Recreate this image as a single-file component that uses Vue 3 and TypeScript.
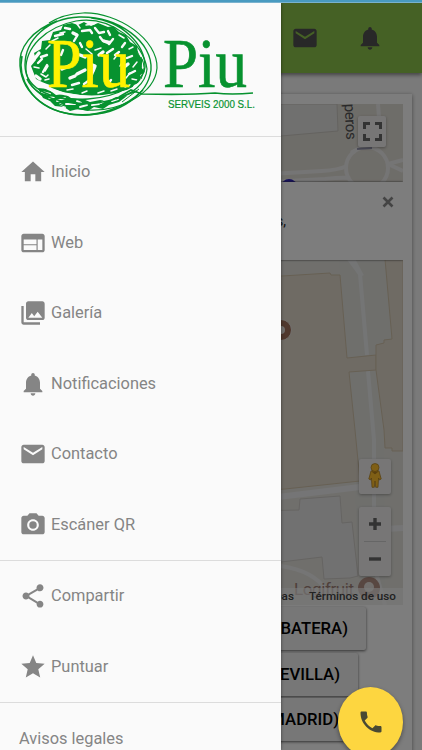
<script setup lang="ts">
import { ref } from 'vue'

interface MenuItem {
    label: string
    icon: string
}

const icons: Record<string, string> = {
    home: 'M10 20v-6h4v6h5v-8h3L12 3 2 12h3v8z',
    web: 'M20 4H4c-1.1 0-1.99.9-1.99 2L2 18c0 1.1.9 2 2 2h16c1.1 0 2-.9 2-2V6c0-1.1-.9-2-2-2zm-5 14H4v-4h11v4zm0-5H4V9h11v4zm5 5h-4V9h4v9z',
    gallery: 'M22 16V4c0-1.1-.9-2-2-2H8c-1.1 0-2 .9-2 2v12c0 1.1.9 2 2 2h12c1.1 0 2-.9 2-2zm-11-4l2.03 2.71L16 11l4 5H8l3-4zM2 6v14c0 1.1.9 2 2 2h14v-2H4V6H2z',
    bell: 'M12 22c1.1 0 2-.9 2-2h-4c0 1.1.89 2 2 2zm6-6v-5c0-3.07-1.64-5.64-4.5-6.32V4c0-.83-.67-1.5-1.5-1.5s-1.5.67-1.5 1.5v.68C7.63 5.36 6 7.92 6 11v5l-2 2v1h16v-1l-2-2z',
    mail: 'M20 4H4c-1.1 0-1.99.9-1.99 2L2 18c0 1.1.9 2 2 2h16c1.1 0 2-.9 2-2V6c0-1.1-.9-2-2-2zm0 4l-8 5-8-5V6l8 5 8-5v2z',
    camera: 'M12 8.8a3.2 3.2 0 1 0 0 6.4 3.2 3.2 0 0 0 0-6.4zM9 2L7.17 4H4c-1.1 0-2 .9-2 2v12c0 1.1.9 2 2 2h16c1.1 0 2-.9 2-2V6c0-1.1-.9-2-2-2h-3.17L15 2H9zm3 15c-2.76 0-5-2.24-5-5s2.24-5 5-5 5 2.24 5 5-2.24 5-5 5z',
    share: 'M18 16.08c-.76 0-1.44.3-1.96.77L8.91 12.7c.05-.23.09-.46.09-.7s-.04-.47-.09-.7l7.05-4.11c.54.5 1.25.81 2.04.81 1.66 0 3-1.34 3-3s-1.34-3-3-3-3 1.34-3 3c0 .24.04.47.09.7L8.04 9.81C7.5 9.31 6.79 9 6 9c-1.66 0-3 1.34-3 3s1.34 3 3 3c.79 0 1.5-.31 2.04-.81l7.12 4.16c-.05.21-.08.43-.08.65 0 1.61 1.31 2.92 2.92 2.92 1.61 0 2.92-1.31 2.92-2.92s-1.31-2.92-2.92-2.92z',
    star: 'M12 17.27L18.18 21l-1.64-7.03L22 9.24l-7.19-.61L12 2 9.19 8.63 2 9.24l5.46 4.73L5.82 21z',
    phone: 'M6.62 10.79c1.44 2.83 3.76 5.14 6.59 6.59l2.2-2.2c.27-.27.67-.36 1.02-.24 1.12.37 2.33.57 3.57.57.55 0 1 .45 1 1V20c0 .55-.45 1-1 1-9.39 0-17-7.61-17-17 0-.55.45-1 1-1h3.5c.55 0 1 .45 1 1 0 1.25.2 2.45.57 3.57.11.35.03.74-.25 1.02l-2.2 2.2z',
    fullscreen: 'M0 0h7v3H3v4H0zM12 0h7v7h-3V3h-4zM0 12h3v4h4v3H0zM16 12h3v7h-7v-3h4z'
}

const sections = ref<MenuItem[][]>([
    [
        { label: 'Inicio', icon: 'home' },
        { label: 'Web', icon: 'web' },
        { label: 'Galería', icon: 'gallery' },
        { label: 'Notificaciones', icon: 'bell' },
        { label: 'Contacto', icon: 'mail' },
        { label: 'Escáner QR', icon: 'camera' }
    ],
    [
        { label: 'Compartir', icon: 'share' },
        { label: 'Puntuar', icon: 'star' }
    ]
])

const offices = ['(ALBATERA)', '(SEVILLA)', '(MADRID)']
const open = ref(true)
</script>

<template>
<div class="screen">
    <div class="status"></div>
    <header class="toolbar">
        <svg viewBox="0 0 24 24"><path :d="icons.mail"/></svg>
        <svg viewBox="0 0 24 24"><path :d="icons.bell"/></svg>
    </header>
    <main class="content">
        <section class="card">
            <div class="map">
                <svg class="tiles" viewBox="19 104 384 501">
                    <rect x="19" y="104" width="384" height="501" fill="#dddad2"/>
                    <path d="M19 104H337L338 131L281 136L19 150z" fill="#e0e0de" stroke="#c9c6c0"/>
                    <g fill="none" stroke="#ebeaea" stroke-width="4">
                        <path d="M270 174L322 171Q338 170 347 166M270 182L325 179Q342 177 350 178M352 150L354 154M378 104L380 130M388 164L403 160M388 164L403 171"/>
                        <circle cx="367" cy="168" r="21"/>
                    </g>
                    <path d="M357 149L372 148" stroke="#9a9ab2" stroke-width="2"/>
                    <circle cx="289" cy="187" r="8" fill="#2d22b8"/>
                    <path d="M19 259H403V605H19z" fill="#e0dfd9"/>
                    <path d="M339 259H386L392 340L376 345V370L384 450L385 605H362L348 370L340 275z" fill="#deded9"/>
                    <path d="M349 259L360 274L367 355M368 371L374 440V515M353 259L362 276" fill="none" stroke="#e9eaeb" stroke-width="4"/>
                    <path d="M100 290L282 276L330 273L331 275L340 275L347 358L376 355V370L349 372L355 430L360 481L285 489L120 500z" fill="#ded6c9" stroke="#cfc1a8"/>
                    <path d="M385 259L392 339L384 340V343L376 345V370L384 430L385 448H392V451H403V259z" fill="#ded6c8" stroke="#cfc1a8"/>
                    <path d="M270 498L360 487M385 529L403 528" stroke="#ebebec" stroke-width="6"/>
                    <path d="M200 512L299 510L300 499L340 496L342 523L352 522L358 576L350 578L324 579L322 557L281 562H200z" fill="#e3e2e2" stroke="#ccc9c5"/>
                    <path d="M281 566Q314 571 326 590M367 540L385 605" fill="none" stroke="#ebeaea" stroke-width="4"/>
                    <circle cx="281" cy="330" r="10.5" fill="#a0715c" stroke="#e5dfda"/>
                    <circle cx="281" cy="330" r="4" fill="#e5dfda"/>
                    <circle cx="369" cy="588" r="11" fill="#b18e83"/>
                    <circle cx="369" cy="587" r="5" fill="#e5dfda"/>
                    <text class="street" transform="translate(344.5 104) rotate(87)" textLength="36">peros</text>
                    <text class="place" x="294" y="595" textLength="60">Logifruit</text>
                </svg>
                <div class="info">
                    <p>Polígonos,</p>
                    <svg viewBox="0 0 12 12"><path d="M1.5 1.5l9 9M10.5 1.5l-9 9"/></svg>
                </div>
                <div class="control full"><svg viewBox="0 0 19 19"><path :d="icons.fullscreen"/></svg></div>
                <div class="control pegman">
                    <svg viewBox="0 0 14 25">
                        <path d="M3 8Q7 6.5 11 8L13.2 16L11.4 17L10.6 15L10 24.3H7.7L7 18L6.3 24.3H4L3.4 15L2.6 17L.8 16z"/>
                        <circle cx="7" cy="4.5" r="4"/>
                        <path class="fold" d="M4 8.5L7 11L10 8.5"/>
                    </svg>
                </div>
                <div class="control zoom">
                    <svg viewBox="0 0 12 12"><path d="M6 0v12M0 6h12"/></svg>
                    <hr/>
                    <svg viewBox="0 0 12 12"><path d="M0 6h12"/></svg>
                </div>
                <div class="legal"><span>Datos de mapas</span><span>Términos de uso</span></div>
            </div>
            <button v-for="office in offices" :key="office" class="office">{{ office }}</button>
        </section>
    </main>

    <div v-if="open" class="backdrop" @click="open = false"></div>
    <button class="fab"><svg viewBox="0 0 24 24"><path :d="icons.phone"/></svg></button>

    <nav v-if="open" class="drawer">
        <div class="brand">
            <svg viewBox="0 0 281 133">
                <!-- solid scribble and the loose patches under it -->
                <path d="M31 63L36 57L34 50L41 46L42 38L50 37L53 29L61 27L63 22L72 20L78 22L84 19L91 23L98 20L108 24L113 23L119 29L126 32L130 39L137 43L138 51L143 57L141 64L145 69L140 72L141 79L134 82L131 87L122 88L111 93L88 93L65 90L52 85L44 80L36 76z" fill="#07922f"/>
                <path d="M38 85L48 86L56 92L65 91L71 95L83 96L90 99L100 97L108 98L116 94L127 93L119 99L109 102L103 106L94 104L88 108L78 106L70 108L64 104L55 103L50 98L43 95z" fill="#07922f"/>
                <g fill="none" stroke="#fafafa" stroke-linecap="round" stroke-linejoin="round">
                    <path stroke-width="1.5" d="M46 46l4-4M39 65l-5-1M41 71l5 3l2-2M45 77l4-1M60 30l5-1M77 21l3 4M86 22l8-1M119 32l5 3M133 44l-4 2M137 59l-4 5M137 77l-5-1M125 84l5-2M111 88l6-2M98 90l6-2M82 90l5-2M67 87l6-1M57 82l5 1M48 63l-3 5M52 38l6-3M114 56l4-5M120 63l3-6M126 75l4-5M95 47l6-2M86 46l6 5"/>
                    <path stroke-width="2.4" d="M41 54l6-2M38 60l4-4M43 81l6 2M55 33l8-2M65 25l5 1M82 28l8-1l2 3M95 25l4 5l5-1M108 28l2 4M113 36l-4 5M125 40l-3 4M132 53l-5 2M135 68l-6 3M77 33l-3 5M80 40l2 4M100 34l3 4l7 1M107 50l6-4M119 49l-4 3M43 69l4-7M84 81l7-5M93 69l-2 5M72 82l7-2M111 77l-4 5M63 47l-2 5"/>
                    <path stroke-width="3.4" d="M35 55l4-5M77 71l8-4M90 61l5 2l-2 5M70 75l5-2M80 52l5 2M99 52l4-3M104 38l5 2M36 73l4 3M73 30l4 2M62 66l7-3M128 61l-5 4"/>
                    <path stroke-width="2" d="M42 89l8 2M49 95l5-1M57 98l8-3M66 101l9 0M77 98l4 2M80 104l7-2M92 102l7-1M101 100l5-3M112 98l6-2M60 101l5 3"/>
                    <path stroke-width="3" d="M30 72C42 89 81 99 119 91Q136 87 143 76"/>
                </g>
                <g fill="none" stroke="#07922f">
                    <path stroke-width="1.4" d="M57 18C32 27 18 45 20 63C22 91 49 113 86 112C121 111 148 91 151 67C153 39 119 13 79 14C48 15 25 37 25 62C25 87 55 99 88 96C118 94 143 80 145 64C145 41 122 18 91 15"/>
                    <path stroke-width="1.2" d="M49 20Q63 11 83 10C119 9 158 37 157 65C155 91 119 109 87 107C55 104 28 90 26 67C25 45 45 24 76 18C112 12 144 41 147 66C146 81 132 91 116 96"/>
                    <path stroke-width="1.6" d="M22 53C17 75 32 103 65 110C98 117 127 103 143 87M27 76C37 97 77 106 112 97L137 88"/>
                    <path stroke-width="1.7" d="M119 94L131 87L142 91Q190 92 215 90Q231 92 253 90"/>
                    <path stroke-width="1" d="M137 48Q146 62 137 79M141 54Q147 64 141 76M122 99L139 86"/>
                </g>
                <text class="piu yellow" x="47" y="84" textLength="83" lengthAdjust="spacingAndGlyphs">Piu</text>
                <text class="piu" x="163" y="84" textLength="84" lengthAdjust="spacingAndGlyphs">Piu</text>
                <text class="tagline" x="168" y="105" textLength="87" lengthAdjust="spacingAndGlyphs">SERVEIS 2000 S.L.</text>
            </svg>
        </div>
        <ul v-for="(section, i) in sections" :key="i">
            <li v-for="item in section" :key="item.label">
                <svg viewBox="0 0 24 24"><path :d="icons[item.icon]"/></svg>
                <span>{{ item.label }}</span>
            </li>
        </ul>
        <p class="notices">Avisos legales</p>
    </nav>
</div>
</template>

<style>
body {
    margin: 0;
}
</style>

<style scoped>
* {
    box-sizing: border-box;
}
.screen {
    position: relative;
    width: 422px;
    height: 750px;
    overflow: hidden;
    background: #f5f5f5;
    font-family: Roboto, "Liberation Sans", sans-serif;
}
.status {
    position: relative;
    z-index: 5;
    height: 3px;
    background: #489ac0;
    border-bottom: 1px solid #79b2ce;
}
.toolbar {
    position: relative;
    display: flex;
    justify-content: flex-end;
    align-items: center;
    gap: 37px;
    height: 70px;
    padding-right: 38px;
    background: #8bc34a;
    box-shadow: 0 2px 4px rgba(0, 0, 0, .45);
}
.toolbar svg {
    width: 28px;
    height: 28px;
    fill: #505050;
}
.content {
    padding: 21px 10px 0;
}
.card {
    height: 700px;
    padding: 10px 9px;
    background: #fbfbfb;
    box-shadow: 0 1px 4px rgba(0, 0, 0, .45);
}
.map {
    position: relative;
    height: 501px;
    overflow: hidden;
}
.tiles {
    display: block;
    width: 100%;
    height: 100%;
}
.street {
    font-size: 15px;
    fill: #555;
}
.place {
    font-size: 17px;
    fill: #9d7e76;
}
.info {
    position: absolute;
    top: 78px;
    left: 0;
    right: 0;
    display: flex;
    justify-content: space-between;
    height: 78px;
    padding: 14px 9px 0 0;
    background: #fbfbfb;
    box-shadow: 0 0 2px #333;
}
.info p {
    width: 267px;
    margin: 17px 0 0;
    text-align: right;
    font-size: 14px;
    color: #222;
}
.info svg {
    width: 12px;
    height: 12px;
    stroke: #888;
    stroke-width: 2.6;
}
.control {
    position: absolute;
    display: flex;
    align-items: center;
    justify-content: center;
    border-radius: 2px;
    background: #eeedec;
    box-shadow: 0 1px 3px rgba(0, 0, 0, .3);
}
.full {
    top: 12px;
    right: 17px;
    width: 28px;
    height: 31px;
}
.full svg {
    width: 19px;
    height: 19px;
    fill: #666;
}
.pegman {
    right: 12px;
    bottom: 111px;
    width: 32px;
    height: 35px;
}
.pegman svg {
    width: 14px;
    height: 25px;
    margin-top: -3px;
    fill: #ffbe2c;
    stroke: #a97a1d;
    stroke-width: .7;
}
.pegman .fold {
    fill: #b8801c;
}
.zoom {
    right: 12px;
    bottom: 29px;
    flex-direction: column;
    justify-content: space-between;
    width: 32px;
    height: 69px;
    padding: 11px 0;
}
.zoom svg {
    width: 12px;
    height: 12px;
    stroke: #666;
    stroke-width: 3.4;
}
.zoom hr {
    width: 22px;
    margin: 0;
    border: 0;
    border-top: 1px solid #ccc;
}
.legal {
    position: absolute;
    right: 0;
    bottom: 0;
    display: flex;
    gap: 15px;
    padding: 0 7px 0 5px;
    background: rgba(245, 245, 245, .65);
    font-size: 11.7px;
    font-weight: 500;
    line-height: 17px;
    color: #444;
}
.office {
    display: block;
    height: 43px;
    margin: 2.3px 0 2px;
    padding: 0 18px;
    border: 0;
    border-radius: 2px;
    background: #eee;
    box-shadow: 0 1px 3px rgba(0, 0, 0, .6);
    font: 500 16.7px Roboto, sans-serif;
    white-space: nowrap;
    text-align: right;
    color: #000;
}
.office:nth-of-type(1) {
    width: 347px;
}
.office:nth-of-type(2) {
    width: 339px;
}
.office:nth-of-type(3) {
    width: 338px;
}
.backdrop {
    position: absolute;
    inset: 3px 0 0;
    background: rgba(0, 0, 0, .5);
}
.fab {
    position: absolute;
    left: 338px;
    top: 687px;
    display: flex;
    align-items: center;
    justify-content: center;
    width: 65px;
    height: 70px;
    padding: 0;
    border: 0;
    border-radius: 50%;
    background: #fdd640;
    box-shadow: 0 2px 4px rgba(0, 0, 0, .4);
}
.fab svg {
    width: 28px;
    height: 28px;
    fill: #494933;
}
.drawer {
    position: absolute;
    top: 3px;
    left: 0;
    width: 281px;
    height: 747px;
    overflow: hidden;
    background: #fafafa;
    box-shadow: 0 0 3px rgba(0, 0, 0, .5);
    color: #858585;
}
.brand svg {
    display: block;
    width: 281px;
    height: 133px;
}
.piu {
    font-family: "Liberation Serif", serif;
    font-size: 70px;
    fill: #07922f;
    stroke: #07922f;
    stroke-width: .7;
}
.yellow {
    fill: #fff200;
    stroke: #fff200;
}
.tagline {
    font-family: "Liberation Sans", sans-serif;
    font-size: 11.5px;
    fill: #07922f;
    stroke: #07922f;
    stroke-width: .2;
}
ul {
    margin: 0;
    padding: 0;
    list-style: none;
    border-top: 1px solid #dcdcdc;
}
li {
    display: flex;
    align-items: center;
    gap: 4px;
    height: 70.5px;
    padding-left: 19px;
    font-size: 16.4px;
}
li span {
    margin-top: -1px;
}
li svg {
    width: 28px;
    height: 28px;
    fill: currentColor;
}
.notices {
    margin: 0;
    padding: 0 19px;
    border-top: 1px solid #dcdcdc;
    font-size: 16.4px;
    line-height: 71px;
}
</style>
